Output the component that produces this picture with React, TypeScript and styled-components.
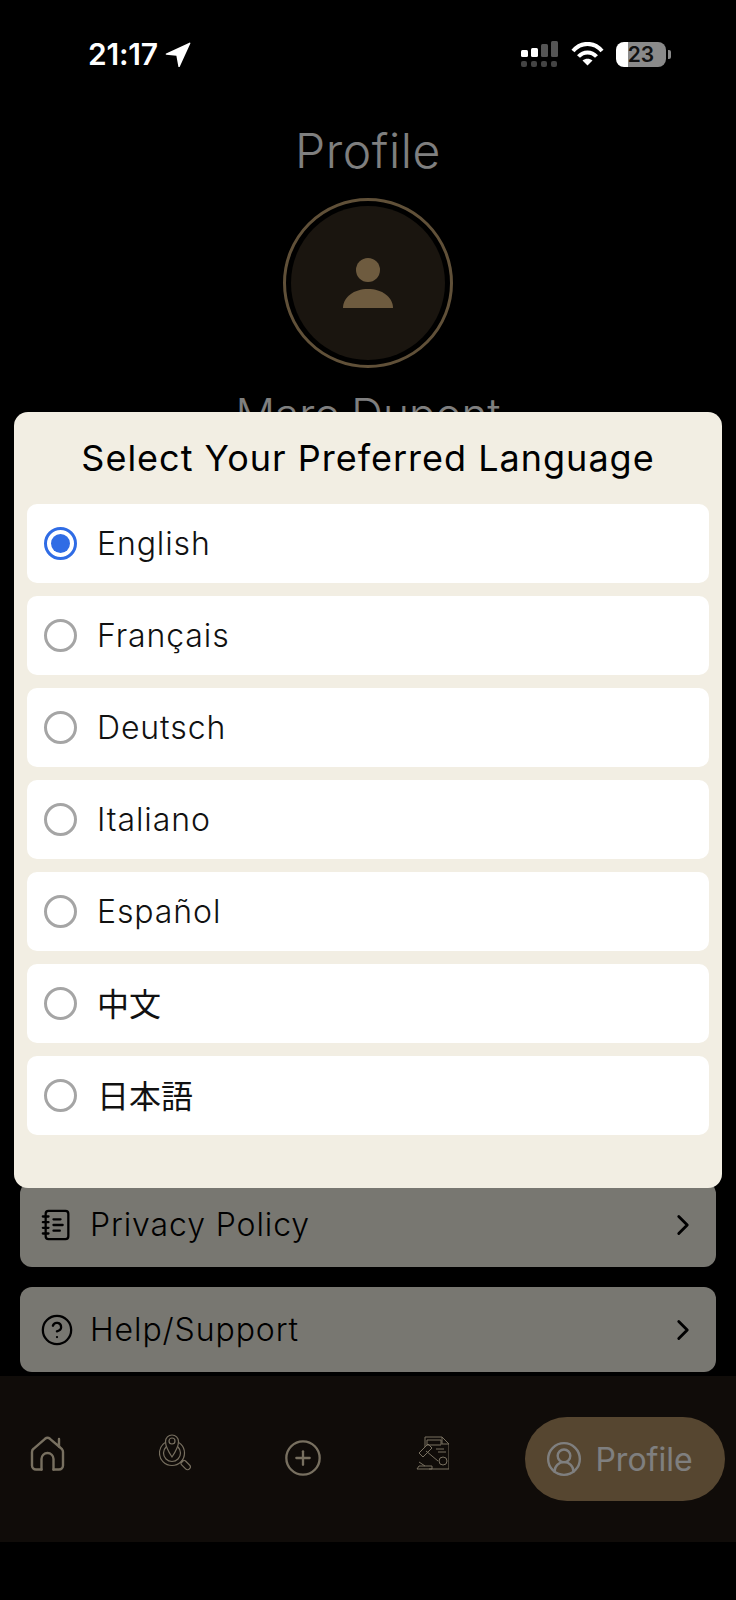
import React from 'react';
import styled, { createGlobalStyle } from 'styled-components';
import { ChevronRight, CircleHelp, CirclePlus, CircleUserRound, NotebookText } from 'lucide-react';

const GlobalStyle = createGlobalStyle`
  html, body {
    margin: 0;
    padding: 0;
    background: #000;
  }
  * {
    box-sizing: border-box;
  }
`;

const FONT = `Inter, "Noto Sans CJK JP", sans-serif`;

const Screen = styled.div`
  position: relative;
  width: 736px;
  height: 1600px;
  overflow: hidden;
  background: #000;
  font-family: ${FONT};
  display: flex;
  flex-direction: column;
`;

const StatusBar = styled.div`
  position: relative;
  z-index: 3;
  height: 108px;
  flex: none;
  padding: 0 65px 0 88px;
  display: flex;
  align-items: center;
  justify-content: space-between;
  color: #fff;
`;

const Clock = styled.div`
  display: flex;
  align-items: center;
  gap: 7px;
  font-size: 30px;
  font-weight: 600;
  letter-spacing: -0.2px;
`;

const StatusIcons = styled.div`
  display: flex;
  align-items: center;
  gap: 12px;
`;

const Battery = styled.div`
  position: relative;
  width: 50px;
  height: 25px;
  border-radius: 8px;
  overflow: hidden;
  background: linear-gradient(90deg, #fff 0 24%, #8a8a8a 24% 100%);
  display: flex;
  align-items: center;
  justify-content: center;
  color: #111;
  font-size: 21px;
  font-weight: 600;
`;

const BatteryNub = styled.div`
  width: 3px;
  height: 9px;
  margin-left: -10px;
  border-radius: 0 2px 2px 0;
  background: #8a8a8a;
`;

const Title = styled.h1`
  margin: 11px 0 0;
  text-align: center;
  color: #fff;
  font-size: 48px;
  line-height: 64px;
  font-weight: 300;
  letter-spacing: 0.6px;
`;

const Avatar = styled.div`
  flex: none;
  align-self: center;
  margin-top: 15px;
  width: 170px;
  height: 170px;
  border-radius: 50%;
  border: 3px solid #c0a070;
  padding: 5px;
  background: #000;
`;

const AvatarInner = styled.div`
  width: 100%;
  height: 100%;
  border-radius: 50%;
  background: #342a1e;
  display: flex;
  align-items: center;
  justify-content: center;
`;

const UserName = styled.div`
  margin-top: 19px;
  text-align: center;
  color: #fff;
  font-size: 44px;
  line-height: 54px;
  font-weight: 300;
`;

const SettingsList = styled.div`
  margin-top: 741px;
  padding: 0 20px;
  display: flex;
  flex-direction: column;
  gap: 20px;
`;

const SettingsRow = styled.div`
  height: 85px;
  border-radius: 12px;
  background: #f1eee3;
  color: #000;
  padding: 0 16px 0 20px;
  display: flex;
  align-items: center;
  gap: 16px;
  font-size: 32px;
  font-weight: 300;
  letter-spacing: 0.9px;
`;

const SettingsLabel = styled.span`
  flex: 1;
`;

const BottomNav = styled.nav`
  margin-top: 4px;
  height: 166px;
  flex: none;
  background: #201812;
  padding: 41px 11px 0 27px;
  display: flex;
  align-items: flex-start;
  gap: 88px;
`;

const NavSlot = styled.div<{ $top: number }>`
  flex: none;
  width: 40px;
  height: 84px;
  padding-top: ${p => p.$top}px;
  display: flex;
  justify-content: center;
  align-items: flex-start;
  color: #f0e0c0;
`;

const ActivePill = styled.div`
  flex: none;
  margin-left: -14px;
  width: 200px;
  height: 84px;
  border-radius: 42px;
  background: #ac8c60;
  color: #fff;
  padding-right: 12px;
  display: flex;
  align-items: center;
  justify-content: center;
  gap: 12px;
  font-size: 32px;
  font-weight: 400;
`;

const Backdrop = styled.div`
  position: absolute;
  inset: 0;
  z-index: 1;
  background: rgba(0, 0, 0, 0.5);
`;

const Sheet = styled.div`
  position: absolute;
  z-index: 2;
  top: 412px;
  left: 14px;
  width: 708px;
  height: 776px;
  border-radius: 14px;
  background: #f2eee3;
  padding: 0 13px;
`;

const SheetTitle = styled.h2`
  margin: 0;
  height: 92px;
  display: flex;
  align-items: center;
  justify-content: center;
  color: #000;
  font-size: 36px;
  font-weight: 400;
  letter-spacing: 1px;
`;

const OptionList = styled.div`
  display: flex;
  flex-direction: column;
  gap: 13px;
`;

const Option = styled.div`
  height: 79px;
  border-radius: 10px;
  background: #fff;
  padding: 0 17px;
  display: flex;
  align-items: center;
  gap: 20px;
  color: #111;
  font-size: 32px;
  font-weight: 300;
  letter-spacing: 0.9px;
`;

const CjkLabel = styled.span`
  font-weight: 400;
  letter-spacing: 0;
  padding-bottom: 4px;
`;

const Radio = styled.span<{ $checked?: boolean }>`
  flex: none;
  width: 33px;
  height: 33px;
  border-radius: 50%;
  border: 3.5px solid ${p => (p.$checked ? '#2f6ce5' : '#a5a5a5')};
  display: flex;
  align-items: center;
  justify-content: center;
  &::after {
    content: '';
    width: 19px;
    height: 19px;
    border-radius: 50%;
    background: ${p => (p.$checked ? '#2f6ce5' : 'transparent')};
  }
`;

const LANGUAGES = ['English', 'Français', 'Deutsch', 'Italiano', 'Español'];
const CJK_LANGUAGES = ['中文', '日本語'];

const LocationArrow = () => (
  <svg width="26" height="26" viewBox="0 0 24 24" fill="#fff">
    <path d="M1 11.500 22.500 1.500c.6-.3 1.100.2.9.9L13.500 24c-.3.6-1 .5-1.100-.1L10.500 13.500 1.200 12.700c-.7-.1-.8-.9-.2-1.200Z" />
  </svg>
);

const SignalIcon = () => (
  <svg width="38" height="26" viewBox="0 0 38 26" fill="#fff">
    <rect x="0" y="9" width="7" height="7" rx="1.500" />
    <rect x="10" y="7" width="7" height="9" rx="1.500" />
    <rect x="20" y="3" width="7" height="13" rx="1.500" fill="#555" />
    <rect x="30" y="0" width="7" height="16" rx="1.500" fill="#555" />
    <rect x="0" y="20" width="6" height="6" rx="2" fill="#444" />
    <rect x="10" y="20" width="6" height="6" rx="2" fill="#444" />
    <rect x="20" y="20" width="6" height="6" rx="2" fill="#444" />
    <rect x="30" y="20" width="6" height="6" rx="2" fill="#444" />
  </svg>
);

const WifiIcon = () => (
  <svg width="33" height="24" viewBox="0 0 33 24" fill="none" stroke="#fff" strokeWidth="4">
    <path d="M2 9C10-.5 23-.5 31 9" />
    <path d="M7.500 14.500c5-5.500 13-5.500 18 0" />
    <path d="M16.500 23.500 11.500 18.500c3-2.500 7-2.500 10 0Z" fill="#fff" stroke="none" />
  </svg>
);

const PersonIcon = () => (
  <svg width="50" height="50" viewBox="0 0 50 50" fill="#dcb67e">
    <circle cx="25" cy="12" r="12" />
    <path d="M0 50C0 39 11 31 25 31s25 8 25 19Z" />
  </svg>
);

const HomeIcon = () => (
  <svg width="35" height="35" viewBox="0 0 35 35" fill="none" stroke="currentColor" strokeWidth="2.400" strokeLinecap="round" strokeLinejoin="round">
    <path d="M11.500 33.500H6a4 4 0 0 1-4-4V16a4 4 0 0 1 1.500-3.200L15 2.800a4 4 0 0 1 5 0L29 10.500V3" />
    <path d="M29 10.500l3 2.700a4 4 0 0 1 1 2.800v13.500a4 4 0 0 1-4 4h-5.500" />
    <path d="M11.500 33.500V23a6 6 0 0 1 12 0v10.500" />
  </svg>
);

const MapSearchIcon = () => (
  <svg width="32" height="40" viewBox="0 0 32 40" fill="none" stroke="currentColor" strokeWidth="1.200">
    <circle cx="13" cy="22" r="12.500" />
    <circle cx="13" cy="22" r="8.500" />
    <path d="M13 26C9 20 6.500 15 6.500 10.500a6.500 6.500 0 0 1 13 0C19.500 15 17 20 13 26Z" fill="#201812" />
    <circle cx="13" cy="10" r="3" />
    <path d="M22 32l2.500-2.500" />
    <rect x="-3" y="-2.500" width="11" height="5.500" rx="2.700" transform="translate(25 32) rotate(45)" />
  </svg>
);

const LawDocIcon = () => (
  <svg width="36" height="34" viewBox="-3 0 36 34" fill="none" stroke="currentColor" strokeWidth="1">
    <path d="M9 11V1h17l7 7v25H13" />
    <path d="M26 1v7h7" />
    <path d="M11 4h14v5H11Z" />
    <path d="M20 13h8M22 16h8" />
    <path d="M3 17l9-9 4 4-9 9Z" />
    <path d="M10 15l12 10" />
    <circle cx="27" cy="25" r="4" />
    <path d="M1 33h15v-3H3l-2 3Z" />
    <path d="M3 26l6 4" />
  </svg>
);

export default function App() {
  return (
    <Screen>
      <GlobalStyle />
      <StatusBar>
        <Clock>
          21:17
          <LocationArrow />
        </Clock>
        <StatusIcons>
          <SignalIcon />
          <WifiIcon />
          <Battery>23</Battery>
          <BatteryNub />
        </StatusIcons>
      </StatusBar>

      <Title>Profile</Title>
      <Avatar>
        <AvatarInner>
          <PersonIcon />
        </AvatarInner>
      </Avatar>
      <UserName>Marc Dupont</UserName>

      <SettingsList>
        <SettingsRow>
          <NotebookText size={34} strokeWidth={1.6} />
          <SettingsLabel>Privacy Policy</SettingsLabel>
          <ChevronRight size={34} strokeWidth={2} />
        </SettingsRow>
        <SettingsRow>
          <CircleHelp size={34} strokeWidth={1.6} />
          <SettingsLabel>Help/Support</SettingsLabel>
          <ChevronRight size={34} strokeWidth={2} />
        </SettingsRow>
      </SettingsList>

      <BottomNav>
        <NavSlot $top={19}>
          <HomeIcon />
        </NavSlot>
        <NavSlot $top={14}>
          <MapSearchIcon />
        </NavSlot>
        <NavSlot $top={21}>
          <CirclePlus size={40} strokeWidth={1.4} />
        </NavSlot>
        <NavSlot $top={19}>
          <LawDocIcon />
        </NavSlot>
        <ActivePill>
          <CircleUserRound size={38} strokeWidth={1.5} />
          Profile
        </ActivePill>
      </BottomNav>

      <Backdrop />
      <Sheet>
        <SheetTitle>Select Your Preferred Language</SheetTitle>
        <OptionList>
          {LANGUAGES.map((language, i) => (
            <Option key={language}>
              <Radio $checked={i === 0} />
              {language}
            </Option>
          ))}
          {CJK_LANGUAGES.map(language => (
            <Option key={language}>
              <Radio />
              <CjkLabel>{language}</CjkLabel>
            </Option>
          ))}
        </OptionList>
      </Sheet>
    </Screen>
  );
}
